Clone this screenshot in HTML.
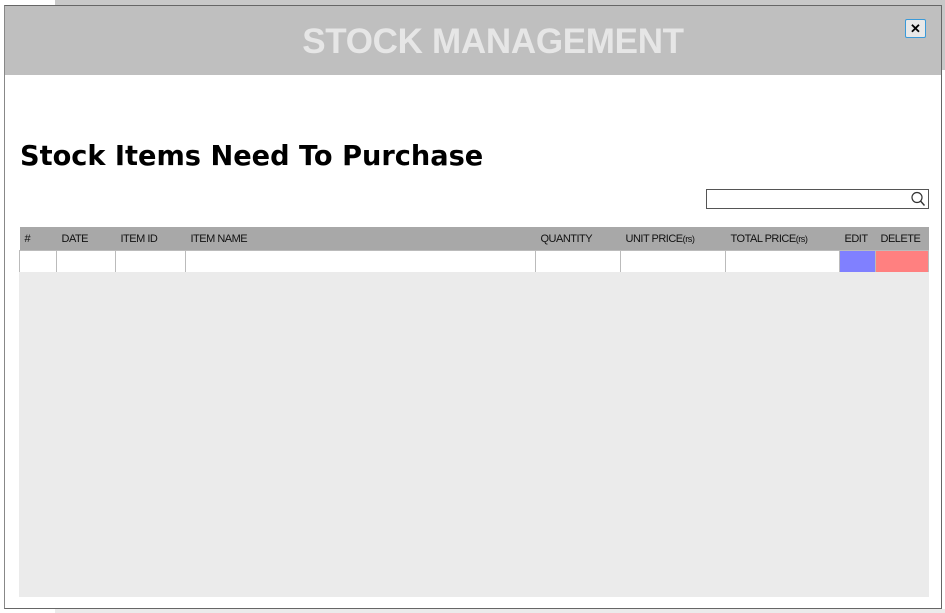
<!DOCTYPE html>
<html><head><style>
body{margin:0;width:945px;height:613px;position:relative;background:#fff;font-family:"Liberation Sans",sans-serif;overflow:hidden}
.bgbar{position:absolute;left:55px;top:0;width:890px;height:70px;background:#c8c8c8}
.bgbot{position:absolute;left:55px;top:609px;width:890px;height:4px;background:#ebebeb}
.modal{position:absolute;left:4px;top:5px;width:936px;height:602px;border:1px solid #666;border-left:1px solid #888;background:#fff}
.hd{position:absolute;left:0;top:0;width:936px;height:69px;background:#bfbfbf;text-align:center;color:#e6e6e6;font-weight:bold;font-size:35px;line-height:72px;letter-spacing:-0.3px;box-sizing:border-box;padding-left:40px}
.x{position:absolute;left:900px;top:13px;width:19px;height:17px;border:1px solid #3a9ad9;border-radius:2px;background:#e8e8e8;font-size:13px;font-weight:bold;line-height:17px;text-align:center}
h1{position:absolute;left:15px;top:135px;margin:0;font-family:"DejaVu Sans",sans-serif;font-size:27.2px;font-weight:bold}
.srch{position:absolute;left:701px;top:183px;width:221px;height:18px;border:1px solid #555}
table{position:absolute;left:14px;top:221px;width:910px;border-collapse:collapse;font-size:11px;letter-spacing:-0.5px}
th{background:#a8a8a8;height:22px;text-align:left;font-weight:normal;padding:1px 0 0 5px;color:#111}
td{height:21px;border:1px solid #bbb;padding:0}
.gray{position:absolute;left:14px;top:266px;width:910px;height:325px;background:#ebebeb}
</style></head><body>
<div class="bgbar"></div><div class="bgbot"></div>
<div class="modal">
<div class="hd">STOCK MANAGEMENT</div>
<div class="x">✕</div>
<h1>Stock Items Need To Purchase</h1>
<div class="srch"><svg width="16" height="16" style="position:absolute;right:2px;top:1px" viewBox="0 0 16 16"><circle cx="7" cy="6.5" r="5" fill="none" stroke="#333" stroke-width="1.2"/><line x1="10.5" y1="10" x2="14.5" y2="14.5" stroke="#333" stroke-width="1.4"/></svg></div>
<table>
<tr><th style="width:32px">#</th><th style="width:54px">DATE</th><th style="width:65px">ITEM ID</th><th style="width:345px">ITEM NAME</th><th style="width:80px">QUANTITY</th><th style="width:100px">UNIT PRICE<small>(rs)</small></th><th style="width:109px">TOTAL PRICE<small>(rs)</small></th><th style="width:31px">EDIT</th><th>DELETE</th></tr>
<tr><td></td><td></td><td></td><td></td><td></td><td></td><td></td><td style="background:#8080ff"></td><td style="background:#ff8080"></td></tr>
</table>
<div class="gray"></div>
</div>
</body></html>
